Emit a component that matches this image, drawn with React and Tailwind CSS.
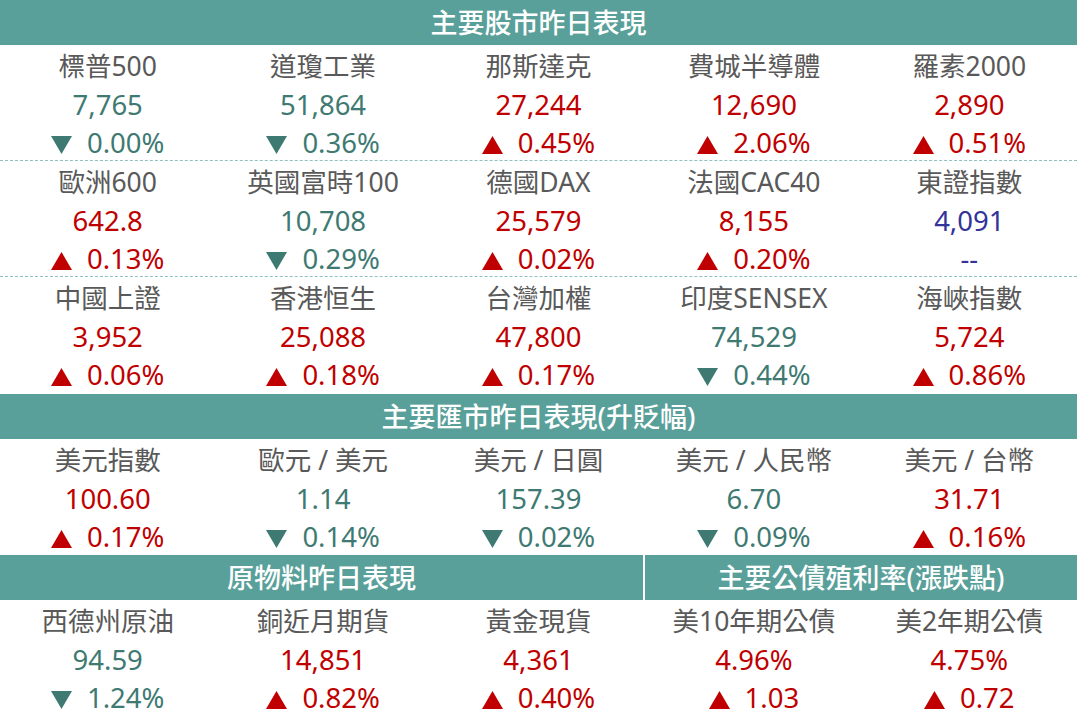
import React from "react";

const FONT = { fontFamily: '"Noto Sans", "Noto Sans CJK TC", sans-serif' };

const stocks = [
  [
    { name: "標普500", value: "7,765", dir: "down", change: "0.00%" },
    { name: "道瓊工業", value: "51,864", dir: "down", change: "0.36%" },
    { name: "那斯達克", value: "27,244", dir: "up", change: "0.45%" },
    { name: "費城半導體", value: "12,690", dir: "up", change: "2.06%" },
    { name: "羅素2000", value: "2,890", dir: "up", change: "0.51%" },
  ],
  [
    { name: "歐洲600", value: "642.8", dir: "up", change: "0.13%" },
    { name: "英國富時100", value: "10,708", dir: "down", change: "0.29%" },
    { name: "德國DAX", value: "25,579", dir: "up", change: "0.02%" },
    { name: "法國CAC40", value: "8,155", dir: "up", change: "0.20%" },
    { name: "東證指數", value: "4,091", dir: "flat", change: "--" },
  ],
  [
    { name: "中國上證", value: "3,952", dir: "up", change: "0.06%" },
    { name: "香港恒生", value: "25,088", dir: "up", change: "0.18%" },
    { name: "台灣加權", value: "47,800", dir: "up", change: "0.17%" },
    { name: "印度SENSEX", value: "74,529", dir: "down", change: "0.44%" },
    { name: "海峽指數", value: "5,724", dir: "up", change: "0.86%" },
  ],
];

const fx = [
  { name: "美元指數", value: "100.60", dir: "up", change: "0.17%" },
  { name: "歐元 / 美元", value: "1.14", dir: "down", change: "0.14%" },
  { name: "美元 / 日圓", value: "157.39", dir: "down", change: "0.02%" },
  { name: "美元 / 人民幣", value: "6.70", dir: "down", change: "0.09%" },
  { name: "美元 / 台幣", value: "31.71", dir: "up", change: "0.16%" },
];

const bottom = [
  { name: "西德州原油", value: "94.59", dir: "down", change: "1.24%" },
  { name: "銅近月期貨", value: "14,851", dir: "up", change: "0.82%" },
  { name: "黃金現貨", value: "4,361", dir: "up", change: "0.40%" },
  { name: "美10年期公債", value: "4.96%", dir: "up", change: "1.03" },
  { name: "美2年期公債", value: "4.75%", dir: "up", change: "0.72" },
];

function Arrow({ dir }) {
  if (dir === "up") {
    return (
      <svg width="21" height="18" viewBox="0 0 21 18" className="mr-[15px] mt-[3px]">
        <polygon points="10.5,0 21,18 0,18" fill="#c00000" />
      </svg>
    );
  }
  return (
    <svg width="21" height="18" viewBox="0 0 21 18" className="mr-[15px] mt-[3px]">
      <polygon points="0,0 21,0 10.5,18" fill="#3e7a72" />
    </svg>
  );
}

function Cell({ item }) {
  const color =
    item.dir === "up" ? "text-[#c00000]" : item.dir === "down" ? "text-[#3e7a72]" : "text-[#333399]";
  return (
    <div className="flex flex-col items-center">
      <div className="h-[38px] flex items-center text-[#595959] whitespace-nowrap">{item.name}</div>
      <div className={`h-[38px] pt-[2px] flex items-center text-[27.5px] ${color}`}>{item.value}</div>
      <div className={`h-[38px] pt-[2px] flex items-center text-[27.5px] ${color}`}>
        {item.dir === "flat" ? (
          <span>{item.change}</span>
        ) : (
          <>
            <Arrow dir={item.dir} />
            <span>{item.change}</span>
          </>
        )}
      </div>
    </div>
  );
}

function Row({ items, dashed }) {
  return (
    <div
      className={`grid grid-cols-5 h-[116px] pt-[2px] ${
        dashed ? "border-b border-dashed border-[#8fc0bf]" : ""
      }`}
    >
      {items.map((it) => (
        <Cell key={it.name} item={it} />
      ))}
    </div>
  );
}

function Header({ children, className = "" }) {
  return (
    <div
      className={`h-[45px] bg-[#59a09a] text-white text-[27px] font-medium flex items-center justify-center ${className}`}
    >
      {children}
    </div>
  );
}

export default function App() {
  return (
    <div className="w-[1077px] h-[718px] bg-white text-[26.5px] leading-none overflow-hidden" style={FONT}>
      <Header>主要股市昨日表現</Header>
      <Row items={stocks[0]} dashed />
      <Row items={stocks[1]} dashed />
      <Row items={stocks[2]} />
      <div className="h-[1px]" />
      <Header>主要匯市昨日表現(升貶幅)</Header>
      <Row items={fx} />
      <div className="flex">
        <Header className="w-[645px] border-r-2 border-white">原物料昨日表現</Header>
        <Header className="flex-1">主要公債殖利率(漲跌點)</Header>
      </div>
      <Row items={bottom} />
    </div>
  );
}
